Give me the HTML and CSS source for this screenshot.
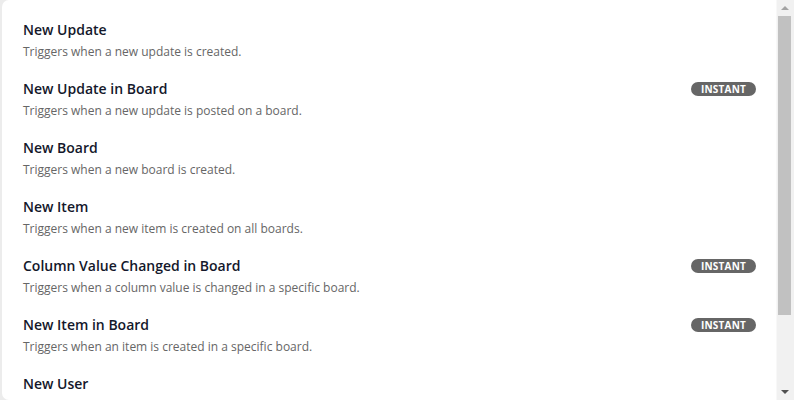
FILE: index.html
```html
<!DOCTYPE html>
<html>
<head>
<meta charset="utf-8">
<link rel="stylesheet" href="styles.css">
</head>
<body>
<div class="frame">
  <div class="card">
    <ul class="list">
      <li class="item">
        <div class="text"><div class="title">New Update</div><div class="desc">Triggers when a new update is created.</div></div>
      </li>
      <li class="item">
        <div class="text"><div class="title">New Update in Board</div><div class="desc">Triggers when a new update is posted on a board.</div></div>
        <span class="badge">INSTANT</span>
      </li>
      <li class="item">
        <div class="text"><div class="title">New Board</div><div class="desc">Triggers when a new board is created.</div></div>
      </li>
      <li class="item">
        <div class="text"><div class="title">New Item</div><div class="desc">Triggers when a new item is created on all boards.</div></div>
      </li>
      <li class="item">
        <div class="text"><div class="title">Column Value Changed in Board</div><div class="desc">Triggers when a column value is changed in a specific board.</div></div>
        <span class="badge">INSTANT</span>
      </li>
      <li class="item">
        <div class="text"><div class="title">New Item in Board</div><div class="desc">Triggers when an item is created in a specific board.</div></div>
        <span class="badge">INSTANT</span>
      </li>
      <li class="item">
        <div class="text"><div class="title">New User</div><div class="desc">Triggers when a new user is created.</div></div>
      </li>
    </ul>
  </div>
  <div class="scrollbar">
    <div class="sb-btn"><span class="arrow-up"></span></div>
    <div class="sb-track"><div class="sb-thumb"></div></div>
    <div class="sb-btn"><span class="arrow-down"></span></div>
  </div>
</div>
</body>
</html>
```
FILE: styles.css
```css
html, body {
  margin: 0;
  padding: 0;
  height: 400px;
  overflow: hidden;
  background: #ececec;
}
.frame {
  display: flex;
  height: 400px;
  padding-left: 2px;
}
.card {
  flex: 1;
  min-width: 0;
  height: 400px;
  background: #fff;
  border-radius: 7px 0 0 7px;
  overflow: hidden;
  font-family: "Open Sans", sans-serif;
}
.scrollbar {
  width: 18px;
  display: flex;
  flex-direction: column;
  background: #f1f1f1;
  border-left: 1px solid #f8f8f8;
  box-sizing: border-box;
}
.sb-btn {
  height: 16px;
  display: flex;
  align-items: center;
  justify-content: center;
  padding-right: 1px;
}
.arrow-up {
  width: 0;
  height: 0;
  border-left: 4px solid transparent;
  border-right: 4px solid transparent;
  border-bottom: 4px solid #a3a3a3;
}
.arrow-down {
  width: 0;
  height: 0;
  border-left: 4px solid transparent;
  border-right: 4px solid transparent;
  border-top: 4px solid #505050;
}
.sb-track {
  flex: 1;
  padding: 0 3px 0 1px;
}
.sb-thumb {
  height: 299px;
  background: #c1c1c1;
}
.list {
  list-style: none;
  margin: 0;
  padding: 10px 0 0 0;
}
.item {
  display: flex;
  align-items: flex-start;
  justify-content: space-between;
  padding: 10px 20px 8px 21px;
}
.title {
  font-size: 14px;
  font-weight: 600;
  line-height: 20px;
  color: #14182b;
}
.desc {
  margin-top: 3px;
  font-size: 12px;
  line-height: 18px;
  color: #666;
}
.badge {
  margin-top: 3px;
  background: #666;
  color: #fff;
  font-size: 10px;
  font-weight: 700;
  line-height: 14px;
  height: 14px;
  padding: 0 10px;
  border-radius: 7px;
  letter-spacing: 0.2px;
}
```
